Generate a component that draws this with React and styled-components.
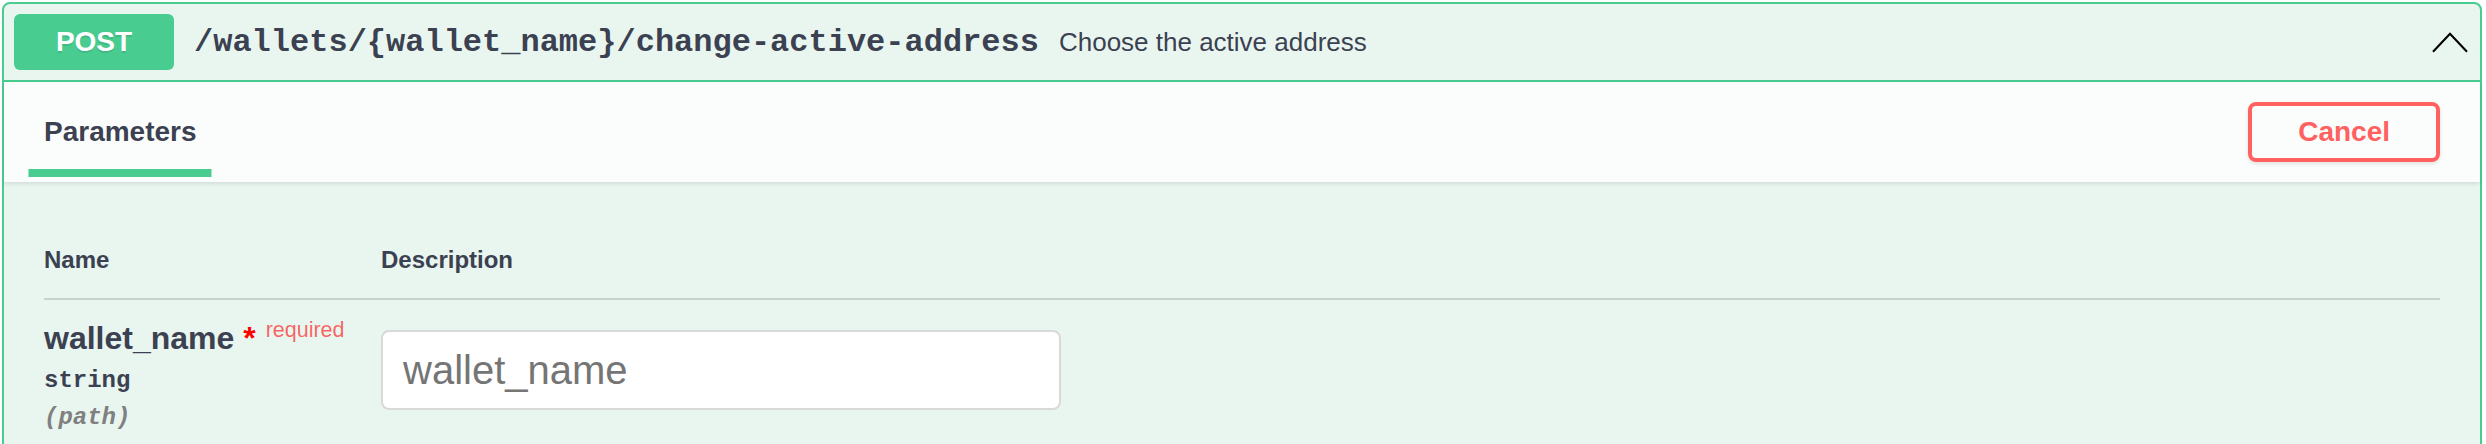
import React from "react";
import styled, { createGlobalStyle } from "styled-components";

const SANS = `"Liberation Sans", Arial, Helvetica, sans-serif`;
const MONO = `"Liberation Mono", "Courier New", monospace`;
const GREEN = "#49cc90";
const TEXT = "#3b4151";

const GlobalStyle = createGlobalStyle`
  html, body { margin: 0; padding: 0; background: #ffffff; }
  body { font-family: ${SANS}; color: ${TEXT}; }
  *, *::before, *::after { box-sizing: border-box; }
`;

const Page = styled.div`
  padding: 2px 4px 0 2px;
`;

const Opblock = styled.section`
  border: 2px solid ${GREEN};
  border-radius: 8px;
  background: #e9f6f0;
`;

const Summary = styled.div`
  display: flex;
  align-items: center;
  padding: 10px;
  border-bottom: 2px solid ${GREEN};
`;

const Method = styled.span`
  flex: none;
  min-width: 160px;
  padding: 12px 0;
  border-radius: 6px;
  background: ${GREEN};
  color: #ffffff;
  font: 700 28px/32px ${SANS};
  text-align: center;
  text-shadow: 0 2px 0 rgba(0, 0, 0, 0.1);
`;

const Path = styled.span`
  display: flex;
  align-items: center;
  padding: 0 20px;
  font: 700 32px ${MONO};
  color: ${TEXT};
`;

const SummaryDescription = styled.span`
  flex: 1 1 auto;
  font: 400 26px ${SANS};
  color: ${TEXT};
`;

const Arrow = styled.svg`
  flex: none;
  width: 40px;
  height: 40px;
`;

const SectionHeader = styled.div`
  display: flex;
  align-items: center;
  min-height: 100px;
  padding: 16px 40px;
  background: rgba(255, 255, 255, 0.8);
  box-shadow: 0 2px 4px rgba(0, 0, 0, 0.1);
`;

const TabTitle = styled.h4`
  flex: 1;
  margin: 0;
  font: 700 28px ${SANS};
  color: ${TEXT};
`;

const TabLabel = styled.span`
  position: relative;
  &::after {
    content: "";
    position: absolute;
    left: 50%;
    bottom: -30px;
    width: 120%;
    height: 8px;
    transform: translateX(-50%);
    background: ${GREEN};
  }
`;

const CancelButton = styled.button`
  padding: 10px 46px;
  border: 4px solid #ff6060;
  border-radius: 8px;
  background: transparent;
  color: #ff6060;
  font: 700 28px/32px ${SANS};
  box-shadow: 0 2px 4px rgba(0, 0, 0, 0.1);
  cursor: pointer;
`;

const TableContainer = styled.div`
  padding: 40px;
`;

const ParamTable = styled.div`
  display: grid;
  grid-template-columns: 337px 1fr;
`;

const HeadCell = styled.div`
  padding: 24px 0;
  font: 700 24px ${SANS};
  color: ${TEXT};
  border-bottom: 2px solid rgba(59, 65, 81, 0.2);
`;

const BodyCell = styled.div`
  padding: ${(p) => (p.$first ? "20px 0" : "20px 0 0")};
`;

const ParamName = styled.div`
  font: 700 32px ${SANS};
  color: ${TEXT};
`;

const Star = styled.span`
  color: #ff0000;
`;

const RequiredTag = styled.span`
  padding: 0 10px;
  font: 400 21.5px ${SANS};
  line-height: 0;
  vertical-align: 12px;
  color: rgba(255, 0, 0, 0.6);
`;

const ParamType = styled.div`
  padding: 10px 0;
  font: 700 24px ${MONO};
  color: ${TEXT};
`;

const ParamIn = styled.div`
  font: italic 700 24px ${MONO};
  color: #808080;
`;

const TextInput = styled.input`
  display: block;
  width: 100%;
  max-width: 680px;
  height: 80px;
  margin: 10px 0;
  padding: 0 20px;
  border: 2px solid #d9d9d9;
  border-radius: 8px;
  background: #ffffff;
  font: 400 40px ${SANS};
  color: ${TEXT};
  outline: none;
  &::placeholder {
    color: #757575;
  }
`;

export default function App() {
  return (
    <>
      <GlobalStyle />
      <Page>
        <Opblock>
          <Summary>
            <Method>POST</Method>
            <Path>/wallets/{"{wallet_name}"}/change-active-address</Path>
            <SummaryDescription>Choose the active address</SummaryDescription>
            <Arrow viewBox="0 0 20 20" aria-hidden="true">
              <polyline
                points="1.5,14.9 10,5.9 18.5,14.9"
                fill="none"
                stroke="#000"
                strokeWidth="1.05"
              />
            </Arrow>
          </Summary>
          <SectionHeader>
            <TabTitle>
              <TabLabel>Parameters</TabLabel>
            </TabTitle>
            <CancelButton>Cancel</CancelButton>
          </SectionHeader>
          <TableContainer>
            <ParamTable>
              <HeadCell>Name</HeadCell>
              <HeadCell>Description</HeadCell>
              <BodyCell $first>
                <ParamName>
                  wallet_name<Star>&nbsp;*</Star>
                  <RequiredTag>required</RequiredTag>
                </ParamName>
                <ParamType>string</ParamType>
                <ParamIn>(path)</ParamIn>
              </BodyCell>
              <BodyCell>
                <TextInput type="text" placeholder="wallet_name" />
              </BodyCell>
            </ParamTable>
          </TableContainer>
        </Opblock>
      </Page>
    </>
  );
}
